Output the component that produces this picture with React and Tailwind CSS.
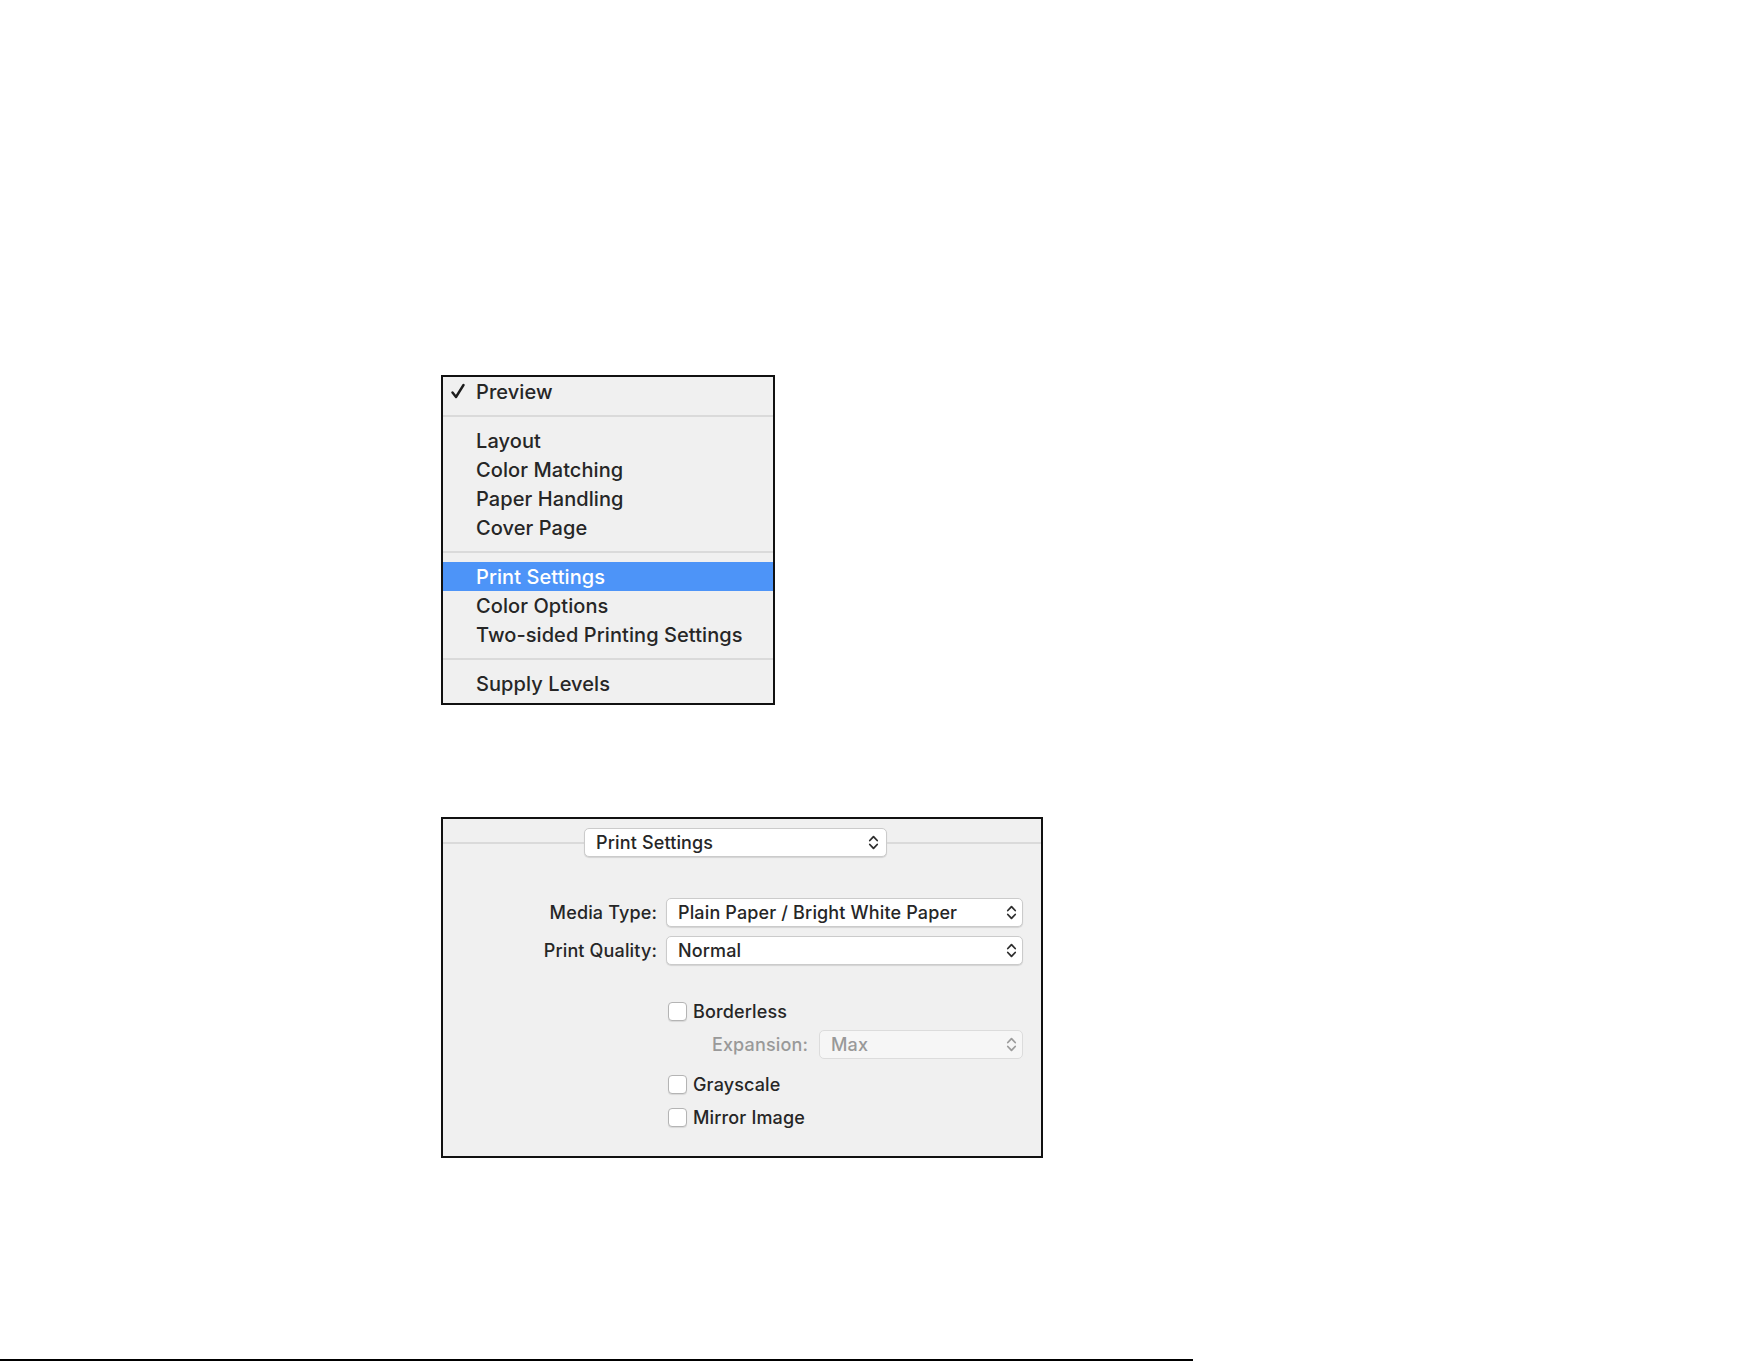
import React from "react";

const FONT = "font-['Inter','Liberation_Sans','Helvetica','Arial',sans-serif]";

function Check() {
  return (
    <svg width="14" height="16" viewBox="0 0 14 16" className="shrink-0">
      <path d="M1.5 9.5 L5 14 L12.5 2" fill="none" stroke="#1c1c1c" strokeWidth="2.4" strokeLinecap="round" strokeLinejoin="round" />
    </svg>
  );
}

function Chevrons({ muted }) {
  return (
    <svg width="11" height="17" viewBox="0 0 11 17" className="shrink-0">
      <path
        d="M1.8 6.5 L5.5 2.6 L9.2 6.5 M1.8 10.5 L5.5 14.4 L9.2 10.5"
        fill="none"
        stroke={muted ? "#9c9c9c" : "#2e2e2e"}
        strokeWidth="1.8"
        strokeLinecap="round"
        strokeLinejoin="round"
      />
    </svg>
  );
}

function MenuItem({ label, active, checked }) {
  return (
    <div
      className={`relative h-[29px] flex items-center pl-[33px] text-[20px] tracking-[0.004em] ${
        active ? "bg-[#4d94f8] text-white" : "text-[#262626]"
      }`}
    >
      {checked && (
        <span className="absolute left-[8px] top-[6px]">
          <Check />
        </span>
      )}
      {label}
    </div>
  );
}

function Separator() {
  return (
    <div className="h-[20px] flex items-center">
      <div className="h-[2px] w-full bg-[#dadada]" />
    </div>
  );
}

function PopUp({ value, className = "", muted }) {
  return (
    <div
      className={`h-[29px] flex items-center justify-between pl-[11px] rounded-[5px] border ${
        muted
          ? "bg-[#f6f6f6] border-[#dcdcdc] text-[#999]"
          : "bg-white border-[#cbcbcb] text-[#262626] shadow-[0_1px_1px_rgba(0,0,0,0.12)]"
      } ${className}`}
    >
      <span>{value}</span>
      <Chevrons muted={muted} />
    </div>
  );
}

function CheckRow({ label, className = "" }) {
  return (
    <div className={`h-[24px] flex items-center gap-[6px] ${className}`}>
      <div className="w-[19px] h-[19px] rounded-[4px] border border-[#b4b4b4] bg-white shadow-[0_1px_1px_rgba(0,0,0,0.1)]" />
      <span className="text-[#262626]">{label}</span>
    </div>
  );
}

export default function App() {
  return (
    <div className={`w-[1761px] h-[1361px] bg-white flex flex-col font-medium ${FONT}`}>
      <div className="pl-[441px] pt-[375px] flex flex-col">
        {/* panel pop-up menu */}
        <div className="w-[334px] h-[330px] border-2 border-[#111] bg-[#f0f0f0] flex flex-col">
          <MenuItem label="Preview" checked />
          <Separator />
          <MenuItem label="Layout" />
          <MenuItem label="Color Matching" />
          <MenuItem label="Paper Handling" />
          <MenuItem label="Cover Page" />
          <Separator />
          <MenuItem label="Print Settings" active />
          <MenuItem label="Color Options" />
          <MenuItem label="Two-sided Printing Settings" />
          <Separator />
          <MenuItem label="Supply Levels" />
        </div>

        {/* print settings pane */}
        <div className="mt-[112px] w-[602px] h-[341px] border-2 border-[#111] bg-[#f0f0f0] flex flex-col text-[18px] tracking-[0.008em]">
          <div className="pt-[9px] flex items-center">
            <div className="w-[141px] h-[2px] bg-[#dadada]" />
            <PopUp value="Print Settings" className="w-[303px] pr-[7px]" />
            <div className="flex-1 h-[2px] bg-[#dadada]" />
          </div>

          <div className="mt-[41px] grid grid-cols-[214px_357px] gap-x-[9px] gap-y-[9px] items-center">
            <div className="text-right text-[#262626]">Media Type:</div>
            <PopUp value="Plain Paper / Bright White Paper" className="pr-[5px]" />
            <div className="text-right text-[#262626]">Print Quality:</div>
            <PopUp value="Normal" className="pr-[5px]" />
          </div>

          <div className="mt-[34px] ml-[225px] w-[355px] flex flex-col">
            <CheckRow label="Borderless" />
            <div className="mt-[7px] -ml-[2px] grid grid-cols-[142px_204px] gap-x-[11px] items-center">
              <div className="text-right text-[#999]">Expansion:</div>
              <PopUp value="Max" muted className="h-[28px] pr-[5px]" />
            </div>
            <CheckRow label="Grayscale" className="mt-[13px]" />
            <CheckRow label="Mirror Image" className="mt-[9px]" />
          </div>
        </div>
      </div>

      <div className="mt-auto flex items-center">
        <div className="w-[1193px] h-[2px] bg-black" />
      </div>
    </div>
  );
}
